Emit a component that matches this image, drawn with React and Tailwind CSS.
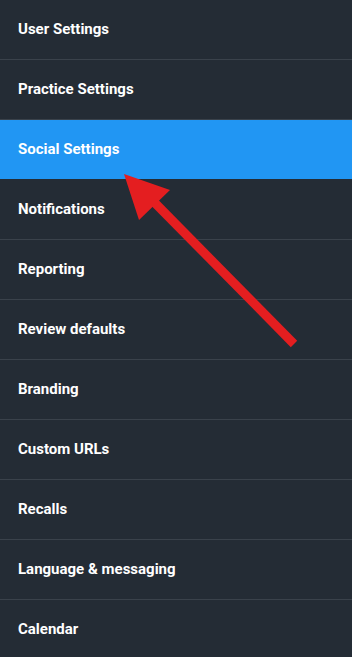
import React from "react";

const items = [
  "User Settings",
  "Practice Settings",
  "Social Settings",
  "Notifications",
  "Reporting",
  "Review defaults",
  "Branding",
  "Custom URLs",
  "Recalls",
  "Language & messaging",
  "Calendar",
];

export default function App() {
  const active = "Social Settings";

  return (
    <div className="relative w-[352px] h-[657px] overflow-hidden bg-[#242c35] font-['Roboto',sans-serif]">
      <ul>
        {items.map((label) => (
          <li
            key={label}
            className={
              label === active
                ? "h-[60px] flex items-center pl-[18px] pb-px border-b border-[#242c35] bg-[#2196f3]"
                : "h-[60px] flex items-center pl-[18px] pb-px border-b border-[#3a424b]"
            }
          >
            <span className="text-[15px] font-bold text-white">{label}</span>
          </li>
        ))}
      </ul>

      {/* annotation arrow */}
      <svg className="absolute inset-0 pointer-events-none" width="352" height="657">
        <line x1="155" y1="203" x2="294" y2="344" stroke="#e41e20" strokeWidth="9" />
        <polygon points="124,174 170,190 139,220" fill="#e41e20" />
      </svg>
    </div>
  );
}
